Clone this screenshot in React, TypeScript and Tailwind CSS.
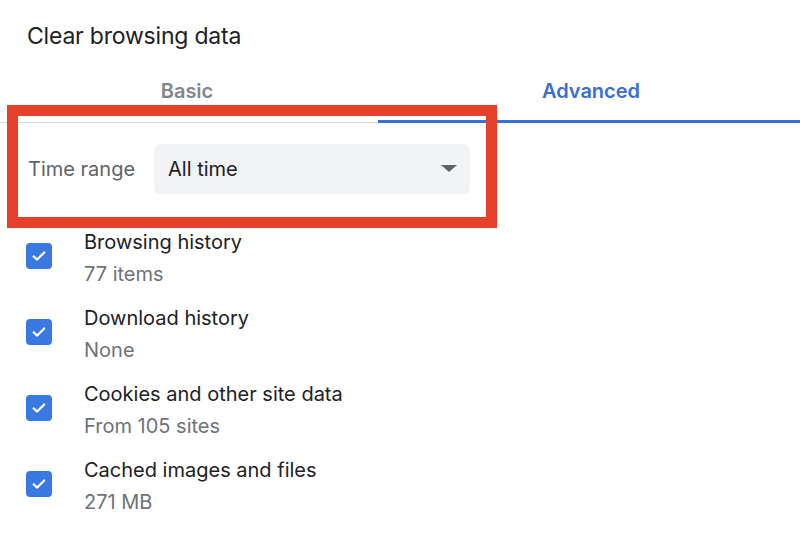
import React from 'react';

const items = [
    { title: 'Browsing history', sub: '77 items' },
    { title: 'Download history', sub: 'None' },
    { title: 'Cookies and other site data', sub: 'From 105 sites' },
    { title: 'Cached images and files', sub: '271 MB' },
];

const CheckBox = () => (
    <div className="w-[26px] h-[26px] rounded-[4px] bg-[#3a78e2] flex items-center justify-center shrink-0">
        <svg width="18" height="18" viewBox="0 0 18 18" fill="none">
            <path d="M3.6 9.4 L7.2 12.6 L14.2 5.4" stroke="white" strokeWidth="2.2" strokeLinecap="round" strokeLinejoin="round" />
        </svg>
    </div>
);

export default function App() {
    return (
        <div className="relative w-[800px] h-[534px] bg-white overflow-hidden" style={{ fontFamily: 'Inter, "Noto Sans", sans-serif' }}>
            {/* Title */}
            <div className="h-[72px] flex items-center pl-[27px]">
                <h1 className="text-[23px] text-[#202124] tracking-[-0.2px]">Clear browsing data</h1>
            </div>

            {/* Tabs */}
            <div className="grid grid-cols-[378px_1fr] border-b border-[#dadce0] h-[51px]">
                <div className="flex justify-center pt-[4px] pr-[4px]">
                    <span className="h-[30px] flex items-center text-[20px] font-semibold text-[#80868b]">Basic</span>
                </div>
                <div className="relative flex justify-center pt-[4px] pl-[4px]">
                    <span className="h-[30px] flex items-center text-[20px] font-semibold text-[#3a6fcf]">Advanced</span>
                    <div className="absolute left-0 right-0 bottom-[-1px] h-[3px] bg-[#3a70d4]" />
                </div>
            </div>

            {/* Time range */}
            <div className="h-[90px] flex items-center pl-[28px] gap-[19px] pt-[2px]">
                <span className="text-[20px] text-[#5f6368]">Time range</span>
                <div className="w-[316px] h-[50px] rounded-[6px] bg-[#f1f3f4] flex items-center justify-between pl-[14px] pr-[13px]">
                    <span className="text-[20px] text-[#202124]">All time</span>
                    <svg width="16" height="8" viewBox="0 0 16 8">
                        <path d="M0 0 L16 0 L8 7 Z" fill="#5f6368" />
                    </svg>
                </div>
            </div>

            {/* Items */}
            <div className="flex flex-col pt-[13px]">
                {items.map((item) => (
                    <div key={item.title} className="h-[76px] flex items-start pl-[26px] gap-[32px]">
                        <div className="h-[61px] flex items-center pb-[1px]">
                            <CheckBox />
                        </div>
                        <div className="flex flex-col">
                            <span className="h-[31px] flex items-center text-[20px] text-[#202124]">{item.title}</span>
                            <span className="h-[30px] flex items-center pt-[3px] text-[20px] text-[#6e7277]">{item.sub}</span>
                        </div>
                    </div>
                ))}
            </div>

            {/* Annotation box */}
            <div className="absolute left-[7px] top-[105px] w-[490px] h-[123px] border-[11px] border-[#e5402a]" />
        </div>
    );
}
